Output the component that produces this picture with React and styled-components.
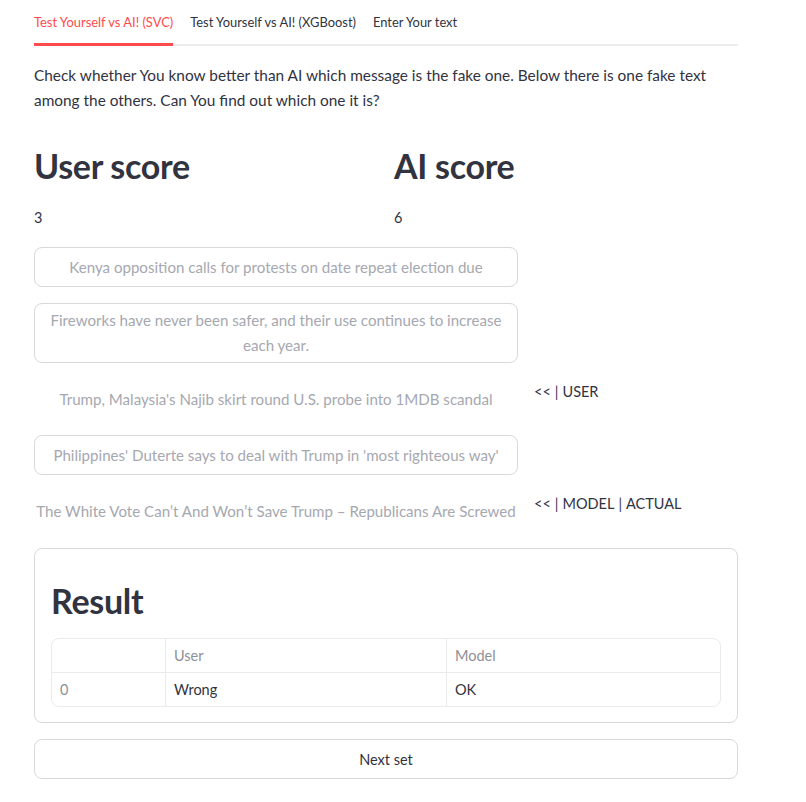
import React from "react";
import styled, { createGlobalStyle } from "styled-components";

const GlobalStyle = createGlobalStyle`
  html, body {
    margin: 0;
    padding: 0;
    background: #ffffff;
  }

  body {
    font-family: Lato, "Noto Sans", sans-serif;
    color: #31333f;
  }
`;

const Page = styled.div`
  width: 704px;
  padding: 0 34px 24px 34px;
  display: flex;
  flex-direction: column;
`;

const TabBar = styled.nav`
  display: flex;
  gap: 17px;
  height: 44px;
  border-bottom: 2px solid #ebebed;
`;

const Tab = styled.button`
  font-family: inherit;
  font-size: 12.9px;
  background: none;
  border: none;
  padding: 0;
  margin-bottom: -2px;
  color: ${(p) => (p.$active ? "#ff4b4b" : "#31333f")};
  border-bottom: 3px solid ${(p) => (p.$active ? "#ff4b4b" : "transparent")};
  cursor: pointer;
`;

const Intro = styled.p`
  margin: 17px 0 0;
  font-size: 15.4px;
  line-height: 25px;
`;

const Columns = styled.div`
  display: grid;
  grid-template-columns: 1fr 1fr;
  column-gap: 16px;
  margin-top: 16px;
`;

const Heading = styled.h2`
  margin: 0;
  padding: 15px 0 16px;
  font-size: 34px;
  font-weight: 700;
  line-height: 43px;
  letter-spacing: -0.3px;
`;

const Score = styled.div`
  margin-top: 2px;
  font-size: 14.5px;
  line-height: 25px;
`;

const Messages = styled.div`
  display: flex;
  flex-direction: column;
  gap: 16px;
  margin-top: 17px;
`;

const MessageRow = styled.div`
  display: grid;
  grid-template-columns: 484px 1fr;
  column-gap: 16px;
  align-items: start;
`;

const MessageButton = styled.button`
  font-family: inherit;
  font-size: 15.1px;
  line-height: 25px;
  min-height: 40px;
  padding: ${(p) => (p.$plain ? "7px 0" : "4px 11px")};
  color: #a6a8b0;
  background: #ffffff;
  text-align: center;
  border-radius: 8px;
  border: ${(p) => (p.$plain ? "none" : "1px solid #d9d9dd")};
`;

const Marker = styled.div`
  font-size: 14.5px;
  line-height: 25px;
  display: flex;
  gap: 4px;
`;

const Bar = styled.span`
  color: #3a3550;
`;

const ResultBox = styled.section`
  margin-top: 17px;
  border: 1px solid #d9d9dd;
  border-radius: 8px;
  padding: 15px 16px 15px;
`;

const Table = styled.div`
  border: 1px solid #ebebee;
  border-radius: 8px;
  display: grid;
  grid-template-columns: 114px 281px 1fr;
  overflow: hidden;
`;

const Cell = styled.div`
  font-size: 14.5px;
  height: 33px;
  padding: 0 8px;
  display: flex;
  align-items: center;
  color: ${(p) => (p.$muted ? "#8d8f97" : "#31333f")};
  border-right: ${(p) => (p.$last ? "none" : "1px solid #ebebee")};
  border-bottom: ${(p) => (p.$bottom ? "none" : "1px solid #ebebee")};
`;

const NextButton = styled.button`
  margin-top: 16px;
  height: 40px;
  font-family: inherit;
  font-size: 14.5px;
  color: #31333f;
  background: #ffffff;
  border: 1px solid #d9d9dd;
  border-radius: 8px;
`;

const messages = [
  { text: "Kenya opposition calls for protests on date repeat election due" },
  {
    text: "Fireworks have never been safer, and their use continues to increase each year.",
  },
  {
    text: "Trump, Malaysia's Najib skirt round U.S. probe into 1MDB scandal",
    plain: true,
    marks: ["USER"],
  },
  { text: "Philippines' Duterte says to deal with Trump in 'most righteous way'" },
  {
    text: "The White Vote Can\u2019t And Won\u2019t Save Trump \u2013 Republicans Are Screwed",
    plain: true,
    marks: ["MODEL", "ACTUAL"],
  },
];

export default function App() {
  return (
    <Page>
      <GlobalStyle />
      <TabBar>
        <Tab $active>Test Yourself vs AI! (SVC)</Tab>
        <Tab>Test Yourself vs AI! (XGBoost)</Tab>
        <Tab>Enter Your text</Tab>
      </TabBar>

      <Intro>
        Check whether You know better than AI which message is the fake one. Below there is one
        fake text among the others. Can You find out which one it is?
      </Intro>

      <Columns>
        <div>
          <Heading>User score</Heading>
          <Score>3</Score>
        </div>
        <div>
          <Heading>AI score</Heading>
          <Score>6</Score>
        </div>
      </Columns>

      <Messages>
        {messages.map((m) => (
          <MessageRow key={m.text}>
            <MessageButton $plain={m.plain}>{m.text}</MessageButton>
            {m.marks && (
              <Marker>
                <span>&lt;&lt;</span>
                {m.marks.map((label) => (
                  <React.Fragment key={label}>
                    <Bar>|</Bar>
                    <span>{label}</span>
                  </React.Fragment>
                ))}
              </Marker>
            )}
          </MessageRow>
        ))}
      </Messages>

      <ResultBox>
        <Heading>Result</Heading>
        <Table>
          <Cell />
          <Cell $muted>User</Cell>
          <Cell $muted $last>Model</Cell>
          <Cell $muted $bottom>0</Cell>
          <Cell $bottom>Wrong</Cell>
          <Cell $bottom $last>OK</Cell>
        </Table>
      </ResultBox>

      <NextButton>Next set</NextButton>
    </Page>
  );
}
